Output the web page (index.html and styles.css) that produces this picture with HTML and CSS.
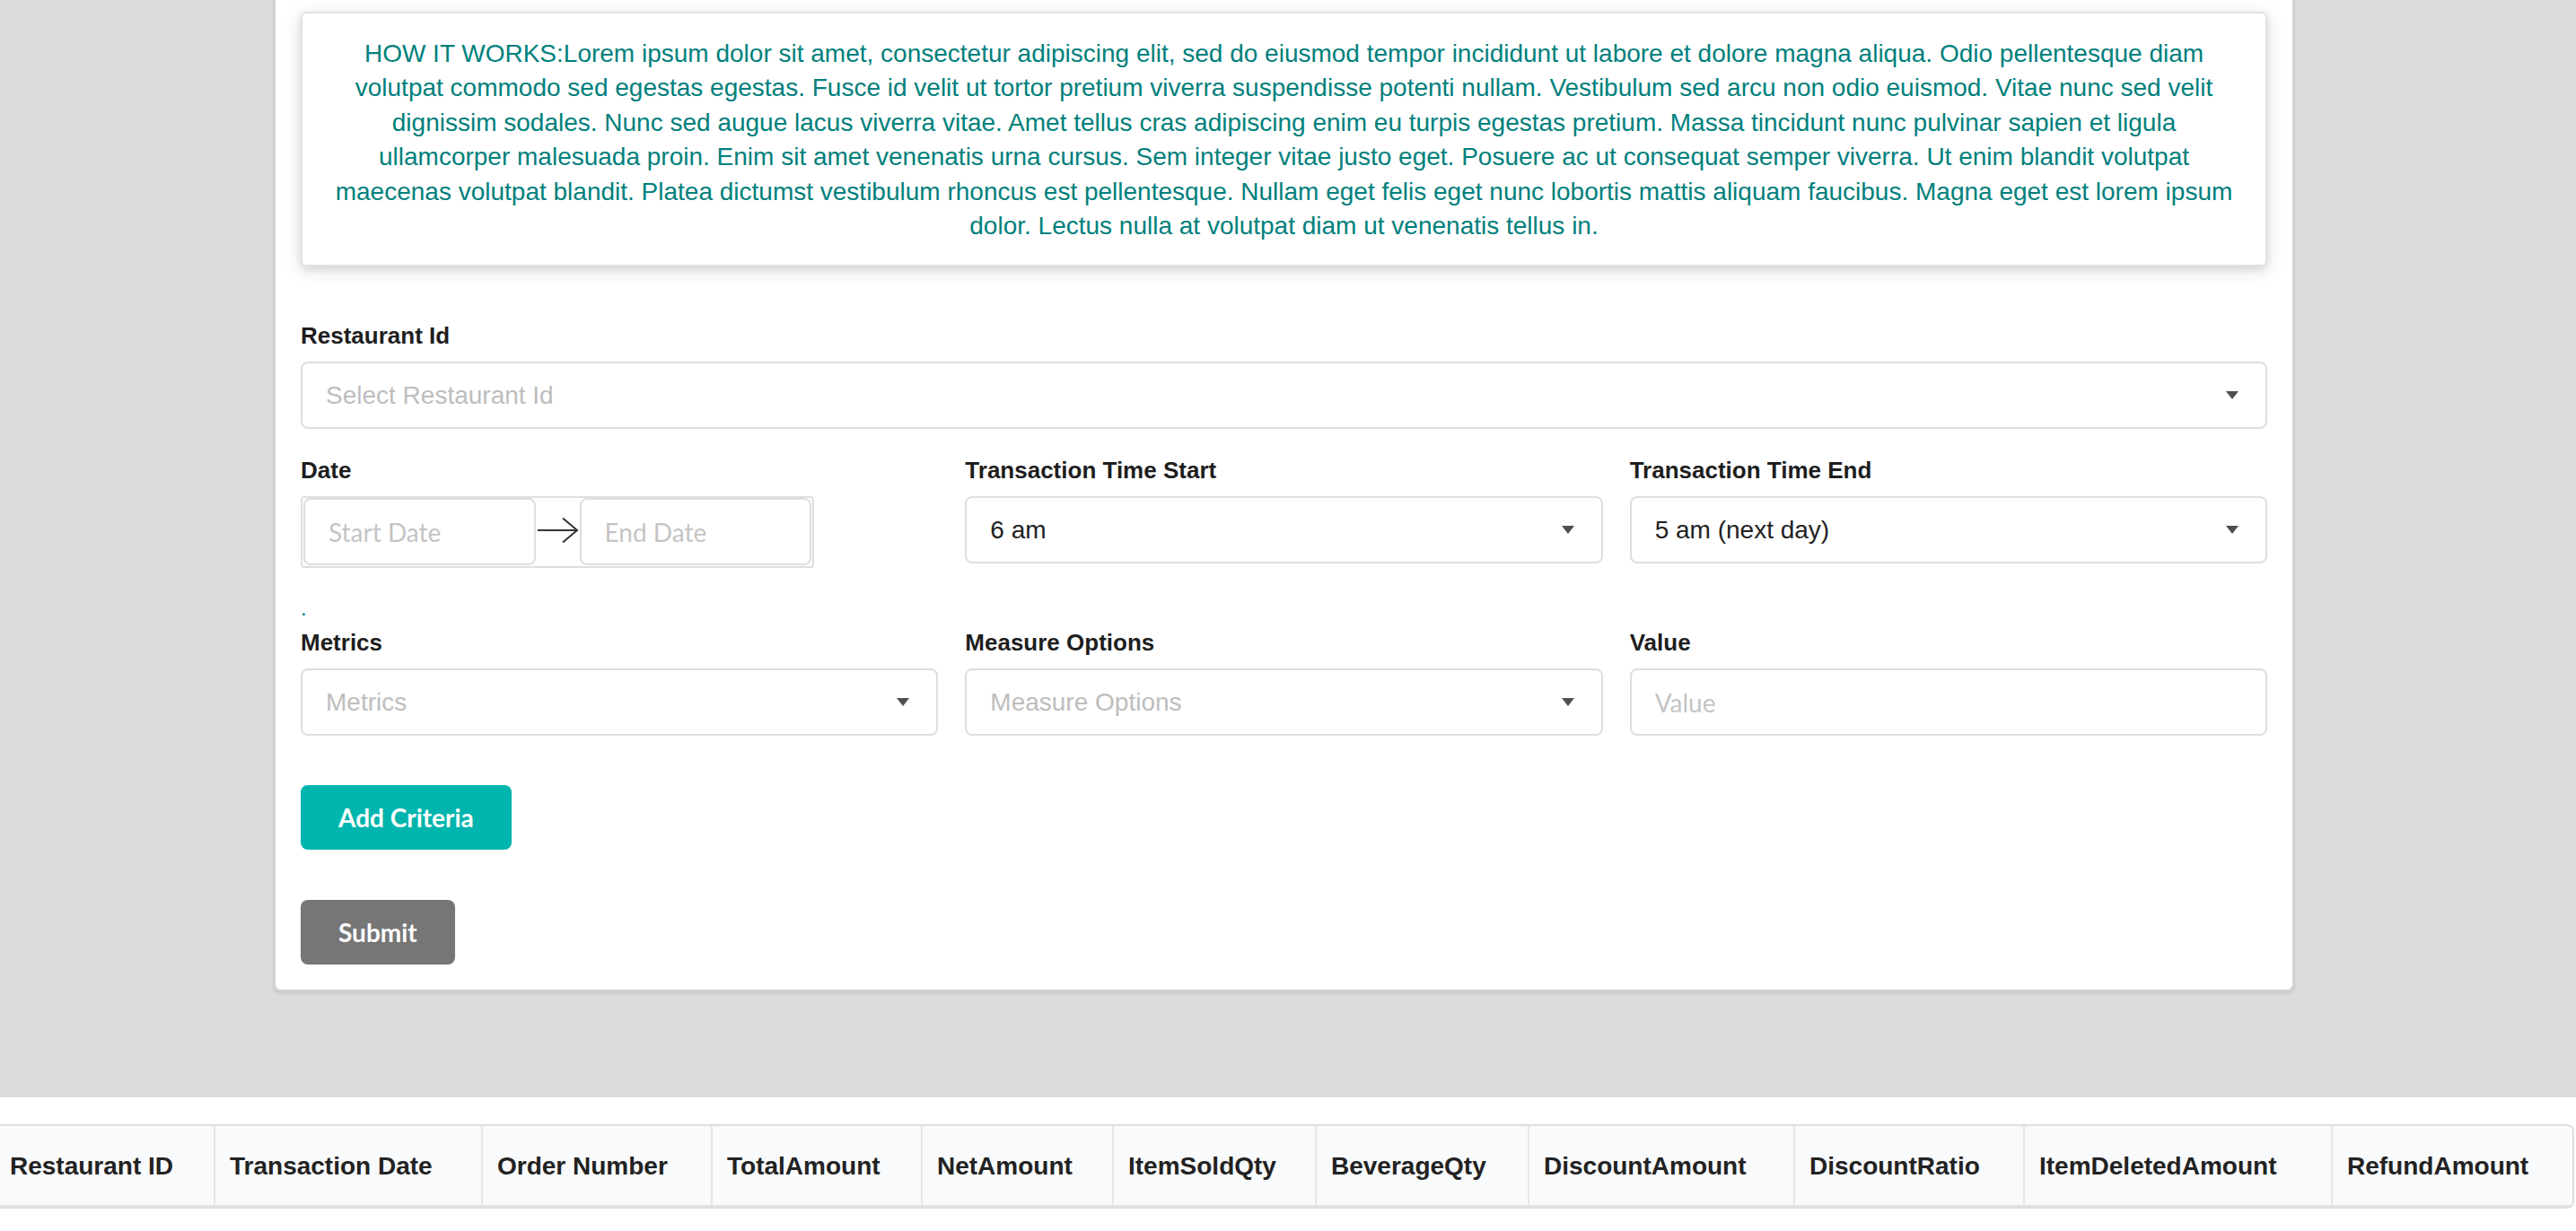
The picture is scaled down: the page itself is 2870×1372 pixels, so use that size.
FILE: index.html
```html
<!DOCTYPE html>
<html lang="en">
<head>
<meta charset="utf-8">
<title>Report Criteria</title>
<link rel="stylesheet" href="styles.css">
</head>
<body>
<div class="stage">
  <div class="card">
    <div class="info">HOW IT WORKS:Lorem ipsum dolor sit amet, consectetur adipiscing elit, sed do eiusmod tempor incididunt ut labore et dolore magna aliqua. Odio pellentesque diam volutpat commodo sed egestas egestas. Fusce id velit ut tortor pretium viverra suspendisse potenti nullam. Vestibulum sed arcu non odio euismod. Vitae nunc sed velit dignissim sodales. Nunc sed augue lacus viverra vitae. Amet tellus cras adipiscing enim eu turpis egestas pretium. Massa tincidunt nunc pulvinar sapien et ligula ullamcorper malesuada proin. Enim sit amet venenatis urna cursus. Sem integer vitae justo eget. Posuere ac ut consequat semper viverra. Ut enim blandit volutpat maecenas volutpat blandit. Platea dictumst vestibulum rhoncus est pellentesque. Nullam eget felis eget nunc lobortis mattis aliquam faucibus. Magna eget est lorem ipsum dolor. Lectus nulla at volutpat diam ut venenatis tellus in.</div>

    <div class="field field-first">
      <div class="label">Restaurant Id</div>
      <div class="select"><span class="placeholder">Select Restaurant Id</span><i class="caret"></i></div>
    </div>

    <div class="grid3">
      <div class="field">
        <div class="label">Date</div>
        <div class="date-range">
          <div class="date-input"><span class="ph-lato">Start Date</span></div>
          <svg class="range-arrow" width="49" height="30" viewBox="0 0 49 30"><path d="M2 15 H46 M30 1.5 L46 15 L30 28.5" fill="none" stroke="#333" stroke-width="2"/></svg>
          <div class="date-input"><span class="ph-lato">End Date</span></div>
        </div>
      </div>
      <div class="field">
        <div class="label">Transaction Time Start</div>
        <div class="select"><span class="value">6 am</span><i class="caret"></i></div>
      </div>
      <div class="field">
        <div class="label">Transaction Time End</div>
        <div class="select"><span class="value">5 am (next day)</span><i class="caret"></i></div>
      </div>
    </div>

    <div class="hint">.</div>

    <div class="grid3">
      <div class="field">
        <div class="label">Metrics</div>
        <div class="select"><span class="placeholder">Metrics</span><i class="caret"></i></div>
      </div>
      <div class="field">
        <div class="label">Measure Options</div>
        <div class="select"><span class="placeholder">Measure Options</span><i class="caret"></i></div>
      </div>
      <div class="field">
        <div class="label">Value</div>
        <div class="text-input"><span class="ph-lato">Value</span></div>
      </div>
    </div>

    <div class="actions actions-add"><button class="btn btn-teal">Add Criteria</button></div>
    <div class="actions actions-submit"><button class="btn btn-grey">Submit</button></div>
  </div>
</div>

<div class="results">
  <div class="table-wrap">
    <table class="data-table">
      <colgroup>
        <col class="w1"><col class="w2"><col class="w3"><col class="w4"><col class="w5"><col class="w6"><col class="w7"><col class="w8"><col class="w9"><col class="w10"><col class="w11">
      </colgroup>
      <thead>
        <tr>
          <th>Restaurant ID</th>
          <th>Transaction Date</th>
          <th>Order Number</th>
          <th>TotalAmount</th>
          <th>NetAmount</th>
          <th>ItemSoldQty</th>
          <th>BeverageQty</th>
          <th>DiscountAmount</th>
          <th>DiscountRatio</th>
          <th>ItemDeletedAmount</th>
          <th>RefundAmount</th>
        </tr>
      </thead>
    </table>
  </div>
</div>
</body>
</html>
```

FILE: styles.css
```css
* { box-sizing: border-box; }

html, body {
  margin: 0;
  padding: 0;
  background: #ffffff;
  overflow: hidden;
  font-family: "Liberation Sans", Arial, sans-serif;
  color: #212121;
}

.stage {
  background: #dcdcdc;
  height: 1223px;
  padding-left: 305px;
}

.card {
  width: 2251px;
  background: #ffffff;
  border: 2px solid #d2d2d3;
  border-top: none;
  border-radius: 0 0 8px 8px;
  box-shadow: 0 2px 4px rgba(34, 36, 38, 0.12);
  padding: 13px 28px 28px 28px;
}

.info {
  border: 2px solid #e2e2e3;
  border-radius: 6px;
  box-shadow: 0 4px 8px rgba(34, 36, 38, 0.10), 0 4px 20px rgba(34, 36, 38, 0.13);
  padding: 26px 30px 24px 30px;
  text-align: center;
  color: #00807c;
  font-size: 28px;
  line-height: 38.4px;
  margin-bottom: 62px;
}

.label {
  font-weight: bold;
  font-size: 26px;
  line-height: 30px;
  color: #1e1e1e;
  margin-bottom: 14px;
}

.field-first { margin-bottom: 31px; }

.grid3 {
  display: grid;
  grid-template-columns: repeat(3, 1fr);
  column-gap: 30px;
}

.select, .text-input {
  height: 75px;
  border: 2px solid #dedede;
  border-radius: 8px;
  background: #fff;
  display: flex;
  align-items: center;
  justify-content: space-between;
  padding: 0 30px 0 26px;
  font-size: 28px;
}

.placeholder { color: #bdbdbd; }
.value { color: #222222; }

.ph-lato {
  font-family: Lato, "Liberation Sans", sans-serif;
  font-size: 28px;
  color: #c4c4c4;
}

.caret {
  width: 0;
  height: 0;
  border-left: 7px solid transparent;
  border-right: 7px solid transparent;
  border-top: 9px solid #4f4f4f;
}

.date-range {
  width: 572px;
  height: 80px;
  border: 2px solid #dedede;
  border-radius: 4px;
  display: flex;
  align-items: flex-start;
  padding: 0 1px;
}

.date-input {
  width: 259px;
  height: 75px;
  border: 2px solid #dedede;
  border-radius: 8px;
  display: flex;
  align-items: center;
  padding-left: 26px;
}

.range-arrow {
  flex: none;
  align-self: center;
  margin-top: -4px;
}

.hint {
  margin: 28px 0 6px 0;
  font-size: 24px;
  line-height: 34px;
  color: #00807c;
}

.actions-add { margin-top: 55px; }
.actions-submit { margin-top: 56px; }

.btn {
  border: none;
  border-radius: 8px;
  height: 72px;
  padding: 0 42px;
  font-family: Lato, "Liberation Sans", sans-serif;
  font-weight: bold;
  font-size: 28px;
  color: #ffffff;
  cursor: pointer;
}

.btn-teal { background: #00b5ad; }
.btn-grey { background: #767676; }

.results {
  background: #ffffff;
  padding-top: 30px;
}

.table-wrap {
  margin-left: -7px;
  width: 2875px;
  border: 2px solid #dedede;
  border-radius: 0 8px 8px 0;
  overflow: hidden;
}

.data-table {
  width: 100%;
  table-layout: fixed;
  border-collapse: collapse;
}

.w1 { width: 244px; }
.w2 { width: 298px; }
.w3 { width: 256px; }
.w4 { width: 234px; }
.w5 { width: 213px; }
.w6 { width: 226px; }
.w7 { width: 237px; }
.w8 { width: 296px; }
.w9 { width: 256px; }
.w10 { width: 343px; }
.w11 { width: 268px; }

.data-table th {
  background: #f9fafb;
  text-align: left;
  font-weight: bold;
  font-size: 28px;
  line-height: 33px;
  color: #222222;
  padding: 27px 10px 27px 16px;
  height: 89px;
  white-space: nowrap;
  overflow: hidden;
  border-left: 2px solid #e6e6e6;
  border-bottom: 2px solid #e3e3e3;
}

.data-table th:first-child { border-left: none; }
```
